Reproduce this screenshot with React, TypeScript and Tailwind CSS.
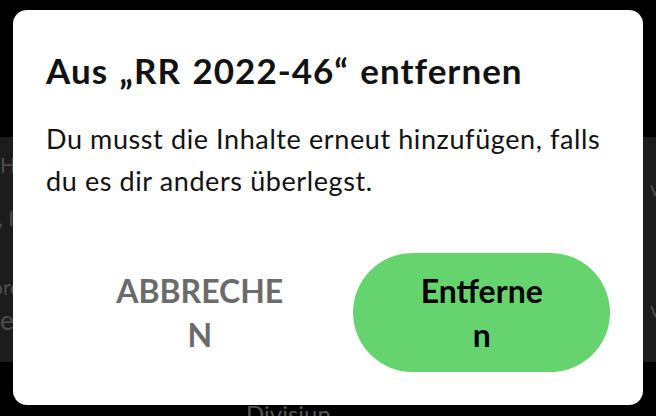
import React from "react";

const font = { fontFamily: "Lato, 'Noto Sans', sans-serif" };

// Liste hinter dem Dialog (nur Ränder sichtbar)
const Background: React.FC = () => (
  <div className="flex flex-col">
    <div className="h-[137px]" />
    <div className="relative flex h-[225px] justify-between bg-[#1c1c1c] text-[21px] leading-none text-[#4e4e4e]">
      <div className="flex flex-col whitespace-nowrap">
        <span className="mt-[17px]">Hörbuch</span>
        <span className="mt-[32px] -ml-[2px]">, Inhalte</span>
        <span className="mt-[48px] -ml-[9px]">orche</span>
        <span className="mt-[10px] text-[26px]">elb</span>
      </div>
      <div className="flex w-[8px] flex-col overflow-hidden whitespace-nowrap">
        <span className="mt-[40px] ml-[2px]">vor 2</span>
        <span className="mt-[100px] ml-[2px]">vor 5</span>
      </div>
    </div>
    <div className="pl-[246px] pt-[40px] text-[24px] leading-none text-[#555]">Divisiun</div>
  </div>
);

const RemoveDialog: React.FC = () => (
  <div className="absolute left-[13px] top-[10px] flex h-[395px] w-[630px] flex-col rounded-[14px] bg-white px-[33px] pt-[41px]">
    <h2 className="text-[35px] font-bold leading-[38px] tracking-[1px] [word-spacing:2px] text-[#121212]">
      Aus „RR 2022-46“ entfernen
    </h2>
    <p className="mt-[29px] text-[27px] leading-[42px] tracking-[0.6px] text-[#121212]">
      Du musst die Inhalte erneut hinzufügen, falls du es dir anders überlegst.
    </p>
    <div className="mt-[51px] flex items-center">
      <button className="w-[308px] text-center text-[32px] font-bold uppercase leading-[44px] text-[#6b6b6b]">
        ABBRECHE
        <br />N
      </button>
      <button className="flex h-[119px] w-[257px] items-center justify-center rounded-full bg-[#65d46e] text-center text-[32px] font-bold leading-[44px] text-black">
        <span>
          Entferne
          <br />n
        </span>
      </button>
    </div>
  </div>
);

export default function App() {
  return (
    <div className="relative h-[416px] w-[656px] overflow-hidden bg-black" style={font}>
      <Background />
      <RemoveDialog />
    </div>
  );
}
